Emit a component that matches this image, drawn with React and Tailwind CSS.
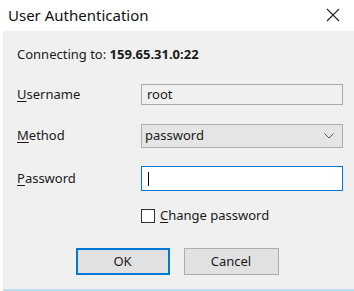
import React from 'react';

const FONT = { fontFamily: '"Segoe UI", "Noto Sans", "Open Sans", sans-serif' };

function Label({ u, rest }) {
  return (
    <span className="w-[124px] text-[13px] text-[#1a1a1a]">
      <span className="underline underline-offset-2">{u}</span>
      {rest}
    </span>
  );
}

export default function App() {
  return (
    <div className="w-[354px] h-[291px] bg-white flex flex-col" style={FONT}>
      {/* Title bar */}
      <div className="h-[31px] flex items-center justify-between pl-[8px] pr-[14px]">
        <span className="text-[15px] text-[#111]">User Authentication</span>
        <svg width="14" height="14" viewBox="0 0 14 14" className="mb-[2px]">
          <path d="M1 1 L13 13 M13 1 L1 13" stroke="#222" strokeWidth="1.1" fill="none" />
        </svg>
      </div>

      {/* Body */}
      <div className="flex-1 ml-[3px] bg-[#f0f0f0] flex flex-col pl-[14px] pr-[11px] border-b-2 border-[#bcdcf4]">
        <div className="mt-[15px] h-[18px] flex items-center text-[13px] text-[#1a1a1a]">
          Connecting to:&nbsp;<b className="font-bold">159.65.31.0:22</b>
        </div>

        <div className="mt-[20px] flex items-center h-[21px]">
          <Label u="U" rest="sername" />
          <div className="flex-1 h-[21px] border border-[#a9a9a9] bg-[#f0f0f0] flex items-center px-[5px] text-[13px] text-[#1a1a1a]">
            root
          </div>
        </div>

        <div className="mt-[19px] flex items-center h-[24px]">
          <Label u="M" rest="ethod" />
          <div className="flex-1 h-[24px] border border-[#adadad] bg-[#e5e5e5] flex items-center justify-between pl-[3px] pr-[8px] text-[13px] text-[#1a1a1a]">
            password
            <svg width="10" height="6" viewBox="0 0 10 6">
              <path d="M0.5 0.5 L5 5 L9.5 0.5" stroke="#555" strokeWidth="1" fill="none" />
            </svg>
          </div>
        </div>

        <div className="mt-[18px] flex items-center h-[25px]">
          <Label u="P" rest="assword" />
          <div className="flex-1 h-[25px] border border-[#0078d7] bg-white flex items-center pl-[6px]">
            <div className="w-px h-[14px] bg-black" />
          </div>
        </div>

        <div className="mt-[17px] ml-[124px] flex items-center gap-[5px] h-[15px]">
          <div className="w-[14px] h-[14px] border border-[#333] bg-white" />
          <span className="text-[13px] text-[#1a1a1a]">
            <span className="underline underline-offset-2">C</span>hange password
          </span>
        </div>

        <div className="mt-[25px] flex justify-center gap-[14px] pr-[6px]">
          <button className="w-[94px] h-[27px] border-2 border-[#0078d7] bg-[#e1e1e1] text-[13px] text-[#1a1a1a]">
            OK
          </button>
          <button className="w-[95px] h-[27px] border border-[#adadad] bg-[#e1e1e1] text-[13px] text-[#1a1a1a]">
            Cancel
          </button>
        </div>
      </div>
    </div>
  );
}
